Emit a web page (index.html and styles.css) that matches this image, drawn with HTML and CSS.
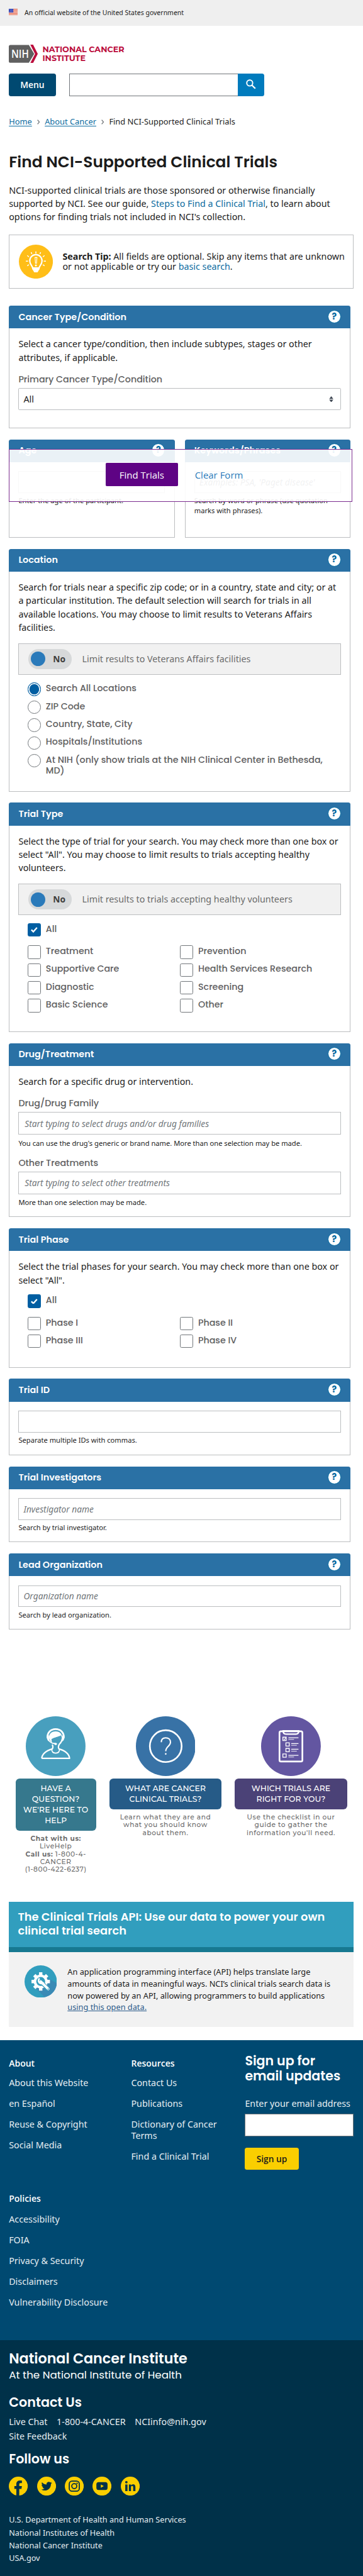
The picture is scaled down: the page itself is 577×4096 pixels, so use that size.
FILE: index.html
```html
<!DOCTYPE html>
<html lang="en">
<head>
<meta charset="utf-8">
<title>Find NCI-Supported Clinical Trials</title>
<link rel="stylesheet" href="styles.css">
</head>
<body>
<div class="page">
<div class="banner">
  <svg class="flag" viewBox="0 0 16 11"><rect width="16" height="11" fill="#fff"/><path d="M0 .5h16M0 2.5h16M0 4.5h16M0 6.5h16M0 8.5h16M0 10.5h16" stroke="#db3e1f"/><rect width="8" height="6.5" fill="#1e33b1"/><path d="M1 1.5h6M2 3.2h6M1 5h6" stroke="#fff" stroke-width=".8" stroke-dasharray="1 1.2"/></svg>
  <span>An official website of the United States government</span>
</div>

<header class="site-header">
  <div class="brand">
    <svg class="brand-mark" viewBox="0 0 52 33"><path d="M3 .5h33l9.500 16-9.500 16H3a3 3 0 0 1-3-3v-26a3 3 0 0 1 3-3z" fill="#606060"/><path d="M38.500 0h5l8.500 16.500-8.500 16.500h-5l8.500-16.500z" fill="#bb0e3d"/><text x="4.500" y="23.500" textLength="31.500" lengthAdjust="spacingAndGlyphs" class="nih">NIH</text></svg>
    <div class="brand-name">NATIONAL CANCER<br>INSTITUTE</div>
  </div>
  <div class="nav-row">
    <button class="menu-btn">Menu</button>
    <div class="search"><input class="search-input" type="text"><button class="search-btn"><svg viewBox="0 0 18 18"><circle cx="6.700" cy="6.700" r="5.300" fill="none" stroke="#fff" stroke-width="2.200"/><path d="M10.700 10.700l6 6" stroke="#fff" stroke-width="2.600"/></svg></button></div>
  </div>
</header>

<main class="main">
  <nav class="crumbs"><a>Home</a><svg viewBox="0 0 5 9"><path d="M.7.7l3.400 3.800L.7 8.300"/></svg><a>About Cancer</a><svg viewBox="0 0 5 9"><path d="M.7.7l3.400 3.800L.7 8.300"/></svg><span>Find NCI-Supported Clinical Trials</span></nav>
  <h1>Find NCI-Supported Clinical Trials</h1>
  <p class="intro">NCI-supported clinical trials are those sponsored or otherwise financially<br>supported by NCI. See our guide, <a>Steps to Find a Clinical Trial</a>, to learn about<br>options for finding trials not included in NCI's collection.</p>

  <div class="tip">
    <svg class="tip-icon" viewBox="0 0 61 61"><circle cx="30.500" cy="30.500" r="30.500" fill="#ffbe18"/><path d="M25 43c0-5-5.500-7-5.500-14a11 11 0 0 1 22 0c0 7-5.500 9-5.500 14z" fill="none" stroke="#fff" stroke-width="2.500"/><path d="M24.500 40.500h12v4l-3 5h-6l-3-5z" fill="#fff"/><path d="M30.500 12v4M22 13.500l1.300 3.300M39 13.500l-1.300 3.300M15 19.500l3 2.500M46 19.500L43 22M12.500 29.500h4M44.500 29.500h4M15 38l3-2M46 38l-3-2" stroke="#fff" stroke-width="1.700"/><path d="M29 23h3.400l-.8 10.500h-1.800z" fill="none" stroke="#fff" stroke-width="1.300"/><circle cx="30.500" cy="37.300" r="1.700" fill="#fff"/></svg>
    <p><b>Search Tip:</b> All fields are optional. Skip any items that are unknown<br>or not applicable or try our <a>basic search</a>.</p>
  </div>

  <form class="form">
    <section class="card card-cancer">
      <div class="card-head"><h2>Cancer Type/Condition</h2><span class="help">?</span></div>
      <p>Select a cancer type/condition, then include subtypes, stages or other<br>attributes, if applicable.</p>
      <label class="label">Primary Cancer Type/Condition</label>
      <div class="field select"><span>All</span><svg viewBox="0 0 8 12"><path d="M0 5.200L4 0l4 5.200zM0 6.800h8L4 12z" fill="#3d4551"/></svg></div>
    </section>

    <div class="pair">
      <section class="card">
        <div class="card-head"><h2>Age</h2><span class="help">?</span></div>
        <div class="field top"></div>
        <div class="hint">Enter the age of the participant.</div>
      </section>
      <section class="card">
        <div class="card-head"><h2>Keywords/Phrases</h2><span class="help">?</span></div>
        <div class="field top"><i>Examples: PSA, 'Paget disease'</i></div>
        <div class="hint">Search by word or phrase (use quotation<br>marks with phrases).</div>
      </section>
      <div class="actions"><button type="button" class="find">Find Trials</button><button type="button" class="clear">Clear Form</button></div>
    </div>

    <section class="card card-location">
      <div class="card-head"><h2>Location</h2><span class="help">?</span></div>
      <p>Search for trials near a specific zip code; or in a country, state and city; or at<br>a particular institution. The default selection will search for trials in all<br>available locations. You may choose to limit results to Veterans Affairs<br>facilities.</p>
      <div class="toggle-row"><span class="toggle"><i class="knob"></i><b>No</b></span><span>Limit results to Veterans Affairs facilities</span></div>
      <div class="options">
        <div class="opt"><i class="radio on"></i><span>Search All Locations</span></div>
        <div class="opt"><i class="radio"></i><span>ZIP Code</span></div>
        <div class="opt"><i class="radio"></i><span>Country, State, City</span></div>
        <div class="opt"><i class="radio"></i><span>Hospitals/Institutions</span></div>
        <div class="opt"><i class="radio"></i><span>At NIH (only show trials at the NIH Clinical Center in Bethesda,<br>MD)</span></div>
      </div>
    </section>

    <section class="card card-type">
      <div class="card-head"><h2>Trial Type</h2><span class="help">?</span></div>
      <p>Select the type of trial for your search. You may check more than one box or<br>select "All". You may choose to limit results to trials accepting healthy<br>volunteers.</p>
      <div class="toggle-row"><span class="toggle"><i class="knob"></i><b>No</b></span><span>Limit results to trials accepting healthy volunteers</span></div>
      <div class="options"><div class="opt"><i class="box on"><svg viewBox="0 0 12 10"><path d="M1 5l3.500 3.500L11 1"/></svg></i><span>All</span></div></div>
      <div class="options two">
        <div class="opt"><i class="box"></i><span>Treatment</span></div><div class="opt"><i class="box"></i><span>Prevention</span></div>
        <div class="opt"><i class="box"></i><span>Supportive Care</span></div><div class="opt"><i class="box"></i><span>Health Services Research</span></div>
        <div class="opt"><i class="box"></i><span>Diagnostic</span></div><div class="opt"><i class="box"></i><span>Screening</span></div>
        <div class="opt"><i class="box"></i><span>Basic Science</span></div><div class="opt"><i class="box"></i><span>Other</span></div>
      </div>
    </section>

    <section class="card card-drug">
      <div class="card-head"><h2>Drug/Treatment</h2><span class="help">?</span></div>
      <p>Search for a specific drug or intervention.</p>
      <label class="label">Drug/Drug Family</label>
      <div class="field tall"><i>Start typing to select drugs and/or drug families</i></div>
      <div class="hint">You can use the drug's generic or brand name. More than one selection may be made.</div>
      <label class="label second">Other Treatments</label>
      <div class="field tall"><i>Start typing to select other treatments</i></div>
      <div class="hint">More than one selection may be made.</div>
    </section>

    <section class="card card-phase">
      <div class="card-head"><h2>Trial Phase</h2><span class="help">?</span></div>
      <p>Select the trial phases for your search. You may check more than one box or<br>select "All".</p>
      <div class="options"><div class="opt"><i class="box on"><svg viewBox="0 0 12 10"><path d="M1 5l3.500 3.500L11 1"/></svg></i><span>All</span></div></div>
      <div class="options two">
        <div class="opt"><i class="box"></i><span>Phase I</span></div><div class="opt"><i class="box"></i><span>Phase II</span></div>
        <div class="opt"><i class="box"></i><span>Phase III</span></div><div class="opt"><i class="box"></i><span>Phase IV</span></div>
      </div>
    </section>

    <section class="card card-id">
      <div class="card-head"><h2>Trial ID</h2><span class="help">?</span></div>
      <div class="field top"></div>
      <div class="hint">Separate multiple IDs with commas.</div>
    </section>
    <section class="card card-short">
      <div class="card-head"><h2>Trial Investigators</h2><span class="help">?</span></div>
      <div class="field top"><i>Investigator name</i></div>
      <div class="hint">Search by trial investigator.</div>
    </section>
    <section class="card card-short">
      <div class="card-head"><h2>Lead Organization</h2><span class="help">?</span></div>
      <div class="field top"><i>Organization name</i></div>
      <div class="hint">Search by lead organization.</div>
    </section>
  </form>

  <div class="features">
    <div class="feature teal">
      <svg viewBox="0 0 107 107"><circle cx="53.500" cy="53.500" r="53.500" fill="#489fbe"/><g fill="none" stroke="#fff" stroke-width="2.500" stroke-linejoin="round"><path d="M28.500 75.500h50c-1-9-9-14-19-17-2-3-1-6 1-9 3-2 5-8 6-14M28.500 75.500c1-9 9-14 19-17 2-3 1-5 0-8"/><path d="M39 39c-1-9 5-16 14.500-16S69 30 68 39" stroke-width="3"/><path d="M46.500 59c0 5 3 7 7 7s7-2 7-7M40 39c1 6 6 10 13 10" stroke-width="2"/></g><path d="M42 41c-2-9 4-14 11.500-14S66 32 65 40l-2-6c-5 3-11 3-17 7l1 8zM38 34h3.500v11C38 43 37 38 38 34zM65.500 34H69c1 4 0 9-3.500 11z" fill="#fff"/><ellipse cx="53.500" cy="49.500" rx="2.500" ry="2" fill="#fff"/></svg>
      <div class="feature-title">HAVE A<br>QUESTION?<br>WE'RE HERE TO<br>HELP</div>
      <div class="feature-text"><b>Chat with us:</b><br>LiveHelp<br><b>Call us:</b> 1-800-4-<br>CANCER<br>(1-800-422-6237)</div>
    </div>
    <div class="feature blue">
      <svg viewBox="0 0 107 107"><circle cx="53.500" cy="53.500" r="53.500" fill="#3872a6"/><g fill="none" stroke="#fff"><circle cx="53.500" cy="53.500" r="28.500" stroke-width="3"/><path d="M45.500 46.500c0-5 3-8 8-8s8.500 3 8.500 8c0 7-8.500 8-8.500 16" stroke-width="2.300"/></g><circle cx="53.500" cy="67.500" r="1.500" fill="#fff"/></svg>
      <div class="feature-title">WHAT ARE CANCER<br>CLINICAL TRIALS?</div>
      <div class="feature-text">Learn what they are and<br>what you should know<br>about them.</div>
    </div>
    <div class="feature violet">
      <svg viewBox="0 0 107 107"><circle cx="53.500" cy="53.500" r="53.500" fill="#6356a1"/><g fill="none" stroke="#fff"><rect x="33" y="27" width="41" height="54" rx="2.500" stroke-width="3"/><path d="M39.500 26h28c0 4-1.500 6-5 6h-18c-3.500 0-5-2-5-6z" stroke-width="2.600"/><path d="M39 37.500h6v6h-6zM44.500 47.500h6v6h-6zM44.500 57.500h6v6h-6zM39 67.500h6v6h-6z" stroke-width="1.500"/><path d="M40.500 40.500l1.500 1.500 2.500-4" stroke-width="1.200"/><path d="M49 38.500h18M54 49h13M54 59h13M49 70h18" stroke-width="1.400"/><path d="M49 41.500h10M54 52h10M54 62.500h10M49 73h10" stroke-width="1"/></g></svg>
      <div class="feature-title">WHICH TRIALS ARE<br>RIGHT FOR YOU?</div>
      <div class="feature-text">Use the checklist in our<br>guide to gather the<br>information you'll need.</div>
    </div>
  </div>

  <section class="api">
    <h2>The Clinical Trials API: Use our data to power your own<br>clinical trial search</h2>
    <div class="api-body">
      <svg viewBox="0 0 58 58"><circle cx="29" cy="29" r="29" fill="#319ebe"/><path d="M40 22l18 10c-1 13-10 23-22 25L19 40z" fill="#3a8ab5"/><path d="M29 12.500v33M12.500 29h33M17.500 17.500l23 23M17.500 40.500l23-23" stroke="#fff" stroke-width="6"/><circle cx="29" cy="29" r="12.500" fill="#fff"/><circle cx="29" cy="29" r="8" fill="#319ebe"/><path d="M30 30L43 43.500" stroke="#319ebe" stroke-width="7"/><path d="M29 29l13.500 13.500" stroke="#fff" stroke-width="4.500" stroke-linecap="round"/><path d="M27 23.500a5 5 0 1 0 7 7" fill="none" stroke="#fff" stroke-width="3"/><circle cx="42.500" cy="42.500" r="1.200" fill="#319ebe"/></svg>
      <p>An application programming interface (API) helps translate large<br>amounts of data in meaningful ways. NCI’s clinical trials search data is<br>now powered by an API, allowing programmers to build applications<br><a>using this open data.</a></p>
    </div>
  </section>
</main>

<footer>
  <div class="foot-links">
    <div class="foot-row">
      <div><h3>About</h3><ul><li>About this Website</li><li>en Español</li><li>Reuse &amp; Copyright</li><li>Social Media</li></ul></div>
      <div><h3>Resources</h3><ul><li>Contact Us</li><li>Publications</li><li>Dictionary of Cancer<br>Terms</li><li>Find a Clinical Trial</li></ul></div>
      <div class="signup"><h2>Sign up for<br>email updates</h2><label>Enter your email address</label><input type="text"><button>Sign up</button></div>
    </div>
    <div class="policies"><h3>Policies</h3><ul><li>Accessibility</li><li>FOIA</li><li>Privacy &amp; Security</li><li>Disclaimers</li><li>Vulnerability Disclosure</li></ul></div>
  </div>
  <div class="foot-base">
    <div class="org">National Cancer Institute</div>
    <div class="org-sub">At the National Institute of Health</div>
    <h2 class="contact">Contact Us</h2>
    <div class="contact-links"><a>Live Chat</a><a>1-800-4-CANCER</a><a>NCIinfo@nih.gov</a></div>
    <div class="contact-links"><a>Site Feedback</a></div>
    <h2 class="follow">Follow us</h2>
    <div class="social">
      <svg viewBox="0 0 34 34"><circle cx="17" cy="17" r="17" fill="#face00"/><path d="M13.500 34V22H10v-5h3.500v-3.500C13.500 9 16 7 20 7h3.500v4.500H21c-1.700 0-2.300.8-2.300 2.300V17h4.800l-.8 5h-4v12z" fill="#003149"/></svg>
      <svg viewBox="0 0 34 34"><circle cx="17" cy="17" r="17" fill="#face00"/><path transform="translate(7.500 7.500) scale(.8)" d="M23.950 4.570a10 10 0 0 1-2.820.770 4.960 4.960 0 0 0 2.160-2.720c-.950.550-2 .950-3.130 1.180a4.920 4.920 0 0 0-8.380 4.480C7.690 8.090 4.070 6.130 1.640 3.160a4.820 4.820 0 0 0-.670 2.480c0 1.710.870 3.210 2.190 4.100a4.900 4.900 0 0 1-2.230-.620v.060a4.920 4.920 0 0 0 3.950 4.830 5 5 0 0 1-2.210.080 4.940 4.940 0 0 0 4.600 3.420A9.870 9.870 0 0 1 0 19.540a13.990 13.990 0 0 0 7.550 2.210c9.050 0 14-7.500 14-13.980 0-.210 0-.420-.020-.630a9.940 9.940 0 0 0 2.420-2.570z" fill="#003149"/></svg>
      <svg viewBox="0 0 34 34"><circle cx="17" cy="17" r="17" fill="#face00"/><g fill="none" stroke="#003149" stroke-width="2"><rect x="8" y="8" width="18" height="18" rx="5"/><circle cx="17" cy="17" r="4.500"/></g><circle cx="22" cy="12" r="1.300" fill="#003149"/></svg>
      <svg viewBox="0 0 34 34"><circle cx="17" cy="17" r="17" fill="#face00"/><rect x="7" y="10" width="20" height="14" rx="4" fill="#003149"/><path d="M15 14l5.200 3-5.200 3z" fill="#face00"/></svg>
      <svg viewBox="0 0 34 34"><circle cx="17" cy="17" r="17" fill="#face00"/><path d="M8 14h4v12H8zM14.500 14h3.700v1.700c.7-1.200 2-2 3.700-2 3.400 0 4.300 2.200 4.300 5.300v7h-4v-6.300c0-1.500-.2-3-1.900-3s-2 1.400-2 2.900V26h-3.800z" fill="#003149"/><circle cx="10" cy="10" r="2.200" fill="#003149"/></svg>
    </div>
    <div class="agencies">U.S. Department of Health and Human Services<br>National Institutes of Health<br>National Cancer Institute<br>USA.gov</div>
  </div>
</footer>
</div>
</body>
</html>
```
FILE: styles.css
```css
* { box-sizing: border-box; }
html { background: #003149; }
body { margin: 0; height: 4096px; overflow: hidden; }
.page {
  zoom: .887;
  background: #fff;
  font: 16.13px/24px "Noto Sans", "Open Sans", sans-serif;
  color: #1b1b1b;
  white-space: nowrap;
}
h1, h2, h3, p, ul { margin: 0; padding: 0; }
ul { list-style: none; }
h1, h2, .label, .opt, .org, .org-sub, .help { font-family: Poppins, Inter, sans-serif; }
a { color: #0b6ba0; }
svg { display: block; flex: none; }
button { border: 0; padding: 0; font-family: "Open Sans", "Noto Sans", sans-serif; }
input { border: 1px solid #71767a; border-radius: 0; background: #fff; padding: 0; margin: 0; display: block; }

.banner { height: 46px; padding-left: 16px; display: flex; align-items: center; gap: 12px; background: #efefef; font-size: 11.85px; }
.flag { width: 16px; height: 11px; margin-top: -3px; }

.site-header { padding: 34px 16px 0; }
.brand { display: flex; gap: 8px; height: 33px; }
.brand-mark { width: 52px; height: 33px; }
.nih { font: 600 20px "Open Sans", sans-serif; fill: #fff; }
.brand-name { font: 700 14.4px/15.5px Montserrat, Inter, sans-serif; color: #bb0e3d; padding-top: 1px; }
.nav-row { display: flex; gap: 24px; margin-top: 19px; height: 40px; }
.menu-btn { width: 84px; border-radius: 4px; background: #004971; color: #fff; font-size: 15.7px; font-weight: 600; }
.search { display: flex; }
.search-input { width: 302px; border-right: 0; }
.search-btn { width: 48px; background: #007bbd; border-radius: 0 4px 4px 0; display: flex; justify-content: center; padding-top: 10px; }
.search-btn svg { width: 18px; height: 18px; }

.main { padding: 34.4px 16px 0; }
.crumbs { display: flex; align-items: center; height: 24px; font-size: 14.5px; }
.crumbs a { text-decoration: underline; text-underline-offset: 2px; }
.crumbs svg { width: 5px; height: 9px; margin: 1px 9px 0; fill: none; stroke: #71767a; stroke-width: 1.5; }
h1 { margin-top: 42.8px; font-size: 28.05px; font-weight: 600; line-height: 36px; }
.intro { margin-top: 19.6px; }
.tip { margin-top: 20.2px; height: 97px; width: 618px; border: 1px solid #bcbec0; padding-left: 17px; display: flex; align-items: center; gap: 17px; line-height: 18px; }
.tip-icon { width: 61px; height: 61px; }

.form { margin-top: 30px; width: 612px; display: flex; flex-direction: column; gap: 20px; }
.card { height: 136px; border: 1px solid #bcbec0; border-top: 0; border-radius: 4px 4px 0 0; padding: 0 16px; }
.card-head { height: 41px; margin: 0 -17px; padding: 0 17px; background: #2a71a5; border-radius: 4px 4px 0 0; color: #fff; display: flex; justify-content: space-between; align-items: center; }
.card-head h2 { font-size: 16.25px; font-weight: 600; line-height: 24px; }
.help { width: 24px; height: 24px; margin-top: -2px; border: 1.5px solid #00689f; border-radius: 50%; background: #fff; color: #00689f; font-size: 16px; font-weight: 700; line-height: 22px; text-align: center; }
.card-head + p { padding-top: 15.8px; }
.label { display: block; margin-top: 17.6px; font-size: 16.1px; font-weight: 500; line-height: 20px; color: #606061; }
.label.second { margin-top: 16.8px; }
.field { height: 39px; margin-top: 5.6px; border: 1px solid #bcbec0; padding: 0 8px; display: flex; align-items: center; }
.field.top { margin-top: 16px; }
.field.tall { height: 40px; padding-left: 10px; }
.field i { font-size: 15.5px; color: #71767a; }
.hint { margin-top: 5px; font-size: 12.58px; line-height: 18px; }
.tall + .hint { margin-top: 6.5px; }
.select { justify-content: space-between; padding-right: 12px; border-radius: 2px; }
.select svg { width: 8px; height: 11px; }
.card-cancer { height: 220px; }
.card-location { height: 435px; }
.card-type { height: 411px; }
.card-drug { height: 312px; }
.card-phase { height: 250px; }
.card-id { height: 137px; }

.pair { position: relative; display: grid; grid-template-columns: 297px 297px; gap: 18px; height: 176px; }
.pair .card { height: 176px; }
.actions { position: absolute; left: 0; top: 17px; width: 615px; height: 95px; border: 1px solid #7c2c8f; background: rgba(255, 255, 255, .9); padding: 24px 0 0 172px; display: flex; gap: 30px; align-items: flex-start; }
.actions button { height: 42px; font-size: 16.9px; font-weight: 500; }
.find { width: 130px; background: #5e0384; color: #fff; border-radius: 2px; }
.clear { background: none; color: #2a7aba; }

.toggle-row { margin-top: 16.2px; height: 57px; border: 1px solid #bcbec0; background: #f1f1f1; display: flex; align-items: center; gap: 19px; padding-left: 16px; color: #6b6b6b; }
.toggle { width: 78px; height: 36px; border-radius: 18px; background: #d7d9da; padding: 0 11px 0 5px; display: flex; align-items: center; justify-content: space-between; color: #3d3d3d; }
.toggle b { font-size: 15.5px; }
.knob { width: 26px; height: 26px; border-radius: 50%; background: #2a7aba; }

.options { margin-top: 14px; padding-left: 16px; display: grid; gap: 8px; }
.options.two { margin-top: 16px; grid-template-columns: 265px auto; column-gap: 8px; }
.opt { height: 24px; display: flex; gap: 9px; font-size: 16.1px; font-weight: 500; line-height: 19px; color: #606061; }
.opt span { padding-top: 1px; }
.radio, .box { width: 24px; height: 24px; flex: none; border: 2px solid #71767a; }
.radio { border-radius: 50%; }
.radio.on { border-color: #005ea2; background: #005ea2; box-shadow: inset 0 0 0 2px #fff; }
.box { border-radius: 3px; }
.box.on { border-color: #005ea2; background: #005ea2; display: grid; place-items: center; }
.box svg { width: 12px; height: 10px; fill: none; stroke: #fff; stroke-width: 2.6; }

.features { margin-top: 155.5px; height: 333.5px; padding-left: 12px; display: grid; grid-template-columns: 144px 201px 201px; gap: 24px; align-items: start; font-family: Montserrat, Inter, sans-serif; text-align: center; }
.feature svg { width: 107px; height: 107px; margin: 0 auto 5.5px; }
.feature-title { border-radius: 7px; padding: 8.5px 0; color: #fff; font-size: 14px; font-weight: 500; line-height: 19px; letter-spacing: .1px; }
.teal .feature-title { background: #36788d; }
.blue .feature-title { background: #265b87; }
.violet .feature-title { background: #4b4277; }
.feature-text { margin-top: 7.6px; color: #6b6b6b; font-size: 12px; font-weight: 500; line-height: 14px; letter-spacing: .65px; }

.api { width: 618px; background: #f2f2f2; height: 224px; }
.api h2 { height: 90px; padding: 14px 0 0 16px; background: #319ebe; border-bottom: 10px solid #177991; color: #fff; font-size: 20.15px; font-weight: 600; line-height: 25.3px; }
.api-body { display: flex; gap: 19px; padding: 23px 0 0 28px; }
.api-body svg { width: 58px; height: 58px; }
.api-body p { padding-top: 2px; font-size: 14.4px; line-height: 21px; }
.api-body a { color: #2c5b8a; text-decoration: underline; }

footer { margin-top: 24px; color: #fff; }
.foot-links { height: 537px; background: #004971; padding-left: 16px; line-height: 21px; color: #e6edf1; }
.foot-row { height: 274px; display: grid; grid-template-columns: 219px 204px 195px; }
.foot-row h3 { margin-top: 30.9px; }
h3 { font: 600 15.8px/20px "Open Sans", "Noto Sans", sans-serif; color: #fff; }
.foot-links ul { margin-top: 15.3px; display: grid; gap: 16px; }
.foot-links .policies ul { margin-top: 17.2px; }
.signup h2 { margin-top: 23.4px; font-size: 23.2px; font-weight: 600; line-height: 27px; color: #fff; }
.signup label { display: block; margin-top: 25.3px; line-height: 20px; }
.signup input { width: 195px; height: 40px; margin-top: 9.3px; }
.signup button { width: 96px; height: 40px; margin-top: 20px; border-radius: 4px; background: #face00; color: #1b1b1b; font-size: 15.5px; font-weight: 600; }

.foot-base { height: 421px; background: #003149; padding: 20px 16px 0; }
.org { font-size: 25.1px; font-weight: 600; line-height: 30px; }
.org-sub { margin-top: 1.3px; font-size: 18.9px; line-height: 24px; }
.foot-base h2 { font-size: 23.3px; font-weight: 600; line-height: 28px; }
.contact { margin: 23.4px 0 6.9px; }
.contact-links { display: flex; gap: 16.5px; line-height: 26px; }
.contact-links a { color: #e6edf1; }
.foot-base .follow { margin-top: 14.1px; }
.social { margin-top: 17.2px; display: flex; gap: 16px; }
.social svg { width: 34px; height: 34px; }
.agencies { margin-top: 31.8px; font-size: 14.3px; line-height: 22.8px; color: #e6edf1; }
```
